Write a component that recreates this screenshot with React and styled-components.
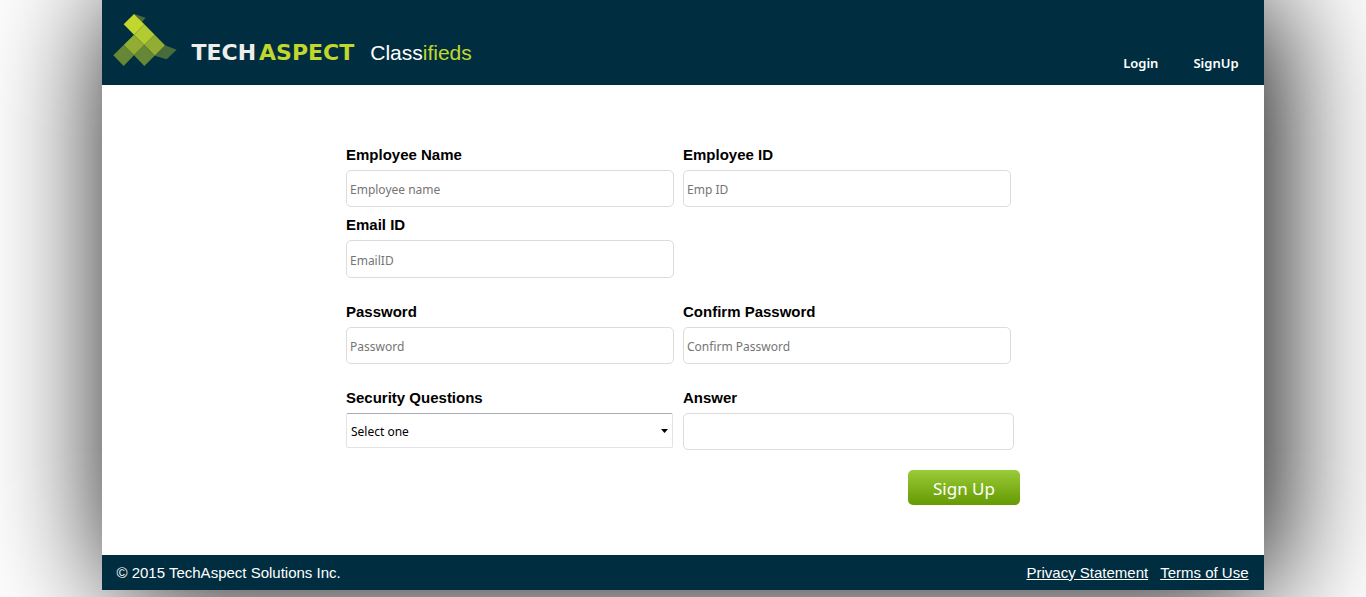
import React from "react";
import styled, { createGlobalStyle } from "styled-components";

const navy = "#002e40";
const lime = "#c1d72e";
const sans = `"Liberation Sans", Arial, sans-serif`;
const humanist = `Tahoma, "Noto Sans", sans-serif`;

const GlobalStyle = createGlobalStyle`
  *, *::before, *::after { box-sizing: border-box; }
  body { margin: 0; background: #fff; font-family: ${sans}; overflow-x: hidden; }
`;

const Page = styled.div`
  width: 85%;
  min-height: calc(100vh - 7px);
  margin: 0 auto 7px;
  display: flex;
  flex-direction: column;
  background: #fff;
  box-shadow: 10px 0 120px #000;
`;

const Header = styled.header`
  display: flex;
  justify-content: space-between;
  align-items: flex-end;
  height: 85px;
  padding: 0 25px 0 11px;
  background: ${navy};
  color: #fff;
`;

const Brand = styled.a`
  display: flex;
  align-items: flex-end;
  padding-bottom: 19px;
  color: #fff;
  text-decoration: none;
`;

const Mark = styled.svg`
  display: block;
  width: 64px;
  height: 52px;
`;

const Wordmark = styled.span`
  display: flex;
  gap: 3px;
  margin-left: 14px;
  font: 700 22px/26px "DejaVu Sans", sans-serif;
  color: #eeeeec;
`;

const SiteName = styled.span`
  margin-left: 16px;
  font: 400 21px/26px ${sans};
`;

const Accent = styled.span`
  color: ${lime};
`;

const Nav = styled.nav`
  display: flex;
  gap: 35px;
  padding-bottom: 13px;
`;

const NavLink = styled.a`
  font: 600 13px/18px "Noto Sans", "Open Sans", sans-serif;
  color: #fff;
  text-decoration: none;
`;

const Main = styled.main`
  flex: 1;
  padding: 61px 16px 50px;
`;

const Form = styled.form`
  display: flex;
  flex-direction: column;
  gap: 25px;
  max-width: 674px;
  margin: 0 auto;
`;

const Fields = styled.div`
  display: grid;
  grid-template-columns: minmax(0, 328px) minmax(0, 331px);
  gap: 9px;
`;

const Field = styled.div`
  display: flex;
  flex-direction: column;
  align-items: flex-start;
  gap: 6px;
`;

const Label = styled.label`
  font: 700 15px/18px ${sans};
  color: #000;
`;

const Input = styled.input`
  width: 100%;
  max-width: ${(p) => (p.$wide ? "331px" : "328px")};
  height: ${(p) => (p.type === "email" ? "38px" : "37px")};
  padding: 3px 3px 1px;
  border: 1px solid #dcdcdc;
  border-radius: 5px;
  background: #fff;
  font: 400 12px/16px ${humanist};
  color: #000;
  &::placeholder { color: #757575; opacity: 1; }
`;

const SelectBox = styled.div`
  position: relative;
  width: 100%;
  max-width: 327px;
`;

const Select = styled.select`
  display: block;
  appearance: none;
  width: 100%;
  height: 35px;
  padding: 2px 20px 0 4px;
  border: 1px solid #e2e3ea;
  border-top-color: #abadb3;
  border-radius: 2px;
  background: #fff;
  font: 400 12px/16px ${humanist};
  color: #000;
`;

const Caret = styled.svg`
  position: absolute;
  top: 16px;
  right: 5px;
  width: 7px;
  height: 4px;
  pointer-events: none;
`;

const Submit = styled.button`
  align-self: flex-end;
  width: 112px;
  height: 35px;
  margin-top: -5px;
  padding: 2px 0 0;
  border: 0;
  border-radius: 5px;
  background: linear-gradient(#9acb38, #659a03);
  font: 400 17px/22px ${humanist};
  color: #fff;
`;

const Footer = styled.footer`
  display: flex;
  justify-content: space-between;
  align-items: center;
  height: 35px;
  padding: 0 15px 0 14px;
  background: ${navy};
  font: 400 15px/18px ${sans};
  color: #fff;
`;

const FooterLinks = styled.div`
  display: flex;
  gap: 12px;
`;

const FooterLink = styled.a`
  color: #fff;
  text-decoration: underline;
`;

function TextField({ id, label, ...rest }) {
  return (
    <Field>
      <Label htmlFor={id}>{label}</Label>
      <Input id={id} type="text" {...rest} />
    </Field>
  );
}

function LogoMark() {
  return (
    <Mark viewBox="40 42 192 156" preserveAspectRatio="none" aria-hidden="true">
      <path d="M103 42 138 53 127 66z" fill="#486b38" />
      <path d="M196 136 231 149 201 178 165 167z" fill="#476b3b" />
      <path d="M103 42 134 73 103 104 72 73z" fill="#c1d72e" />
      <path d="M134 73 165 104 134 135 103 104z" fill="#b2cb30" />
      <path d="M165 104 196 136 165 167 134 135z" fill="#93ad33" />
      <path d="M103 104 134 135 103 166 72 135z" fill="#93ad33" />
      <path d="M72 135 103 166 72 198 41 166z" fill="#658736" />
      <path d="M134 135 165 167 134 198 103 166z" fill="#658736" />
    </Mark>
  );
}

export default function App() {
  return (
    <>
      <GlobalStyle />
      <Page>
        <Header>
          <Brand href="#">
            <LogoMark />
            <Wordmark><span>TECH</span><Accent>ASPECT</Accent></Wordmark>
            <SiteName>Class<Accent>ifieds</Accent></SiteName>
          </Brand>
          <Nav>
            <NavLink href="#login">Login</NavLink>
            <NavLink href="#signup">SignUp</NavLink>
          </Nav>
        </Header>
        <Main>
          <Form onSubmit={(e) => e.preventDefault()}>
            <Fields>
              <TextField id="name" label="Employee Name" placeholder="Employee name" />
              <TextField id="empid" label="Employee ID" placeholder="Emp ID" />
              <TextField id="email" label="Email ID" type="email" placeholder="EmailID" />
            </Fields>
            <Fields>
              <TextField id="password" label="Password" type="password" placeholder="Password" />
              <TextField id="confirm" label="Confirm Password" type="password" placeholder="Confirm Password" />
            </Fields>
            <Fields>
              <Field>
                <Label htmlFor="question">Security Questions</Label>
                <SelectBox>
                  <Select id="question">
                    <option>Select one</option>
                  </Select>
                  <Caret viewBox="0 0 7 4" aria-hidden="true">
                    <path d="M0 0h7L3.500 4z" fill="#000" />
                  </Caret>
                </SelectBox>
              </Field>
              <TextField id="answer" label="Answer" $wide />
            </Fields>
            <Submit type="submit">Sign Up</Submit>
          </Form>
        </Main>
        <Footer>
          <span>© 2015 TechAspect Solutions Inc.</span>
          <FooterLinks>
            <FooterLink href="#privacy">Privacy Statement</FooterLink>
            <FooterLink href="#terms">Terms of Use</FooterLink>
          </FooterLinks>
        </Footer>
      </Page>
    </>
  );
}
